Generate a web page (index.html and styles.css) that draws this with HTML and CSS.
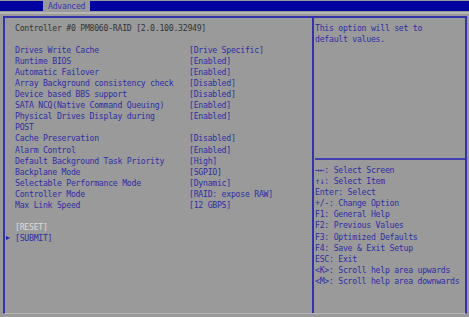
FILE: index.html
```html
<!DOCTYPE html>
<html lang="en">
<head>
  <meta charset="UTF-8">
  <meta name="viewport" content="width=device-width, initial-scale=1.0">
  <title>Advanced - Controller #0</title>
  <link rel="stylesheet" href="styles.css">
</head>
<body>
  <div class="menubar">
    <div class="tab">Advanced</div>
  </div>
  <div class="rule"></div>

  <div class="frame">
    <div class="main">
      <div class="heading">Controller #0 PM8060-RAID [2.0.100.32949]</div>

      <div class="settings">
        <div class="label">Drives Write Cache</div><div class="value">[Drive Specific]</div>
        <div class="label">Runtime BIOS</div><div class="value">[Enabled]</div>
        <div class="label">Automatic Failover</div><div class="value">[Enabled]</div>
        <div class="label">Array Background consistency check</div><div class="value">[Disabled]</div>
        <div class="label">Device based BBS support</div><div class="value">[Disabled]</div>
        <div class="label">SATA NCQ(Native Command Queuing)</div><div class="value">[Enabled]</div>
        <div class="label">Physical Drives Display during<br>POST</div><div class="value">[Enabled]</div>
        <div class="label">Cache Preservation</div><div class="value">[Disabled]</div>
        <div class="label">Alarm Control</div><div class="value">[Enabled]</div>
        <div class="label">Default Background Task Priority</div><div class="value">[High]</div>
        <div class="label">Backplane Mode</div><div class="value">[SGPIO]</div>
        <div class="label">Selectable Performance Mode</div><div class="value">[Dynamic]</div>
        <div class="label">Controller Mode</div><div class="value">[RAID: expose RAW]</div>
        <div class="label">Max Link Speed</div><div class="value">[12 GBPS]</div>
      </div>

      <div class="actions">
        <div class="action muted">[RESET]</div>
        <div class="action current">[SUBMIT]</div>
      </div>
    </div>

    <div class="side">
      <div class="help">This option will set to<br>default values.</div>
      <div class="keys">
        <div>&rarr;&larr;: Select Screen</div>
        <div>&uarr;&darr;: Select Item</div>
        <div>Enter: Select</div>
        <div>+/-: Change Option</div>
        <div>F1: General Help</div>
        <div>F2: Previous Values</div>
        <div>F3: Optimized Defaults</div>
        <div>F4: Save &amp; Exit Setup</div>
        <div>ESC: Exit</div>
        <div>&lt;K&gt;: Scroll help area upwards</div>
        <div>&lt;M&gt;: Scroll help area downwards</div>
      </div>
    </div>
  </div>
</body>
</html>
```

FILE: styles.css
```css
* {
  margin: 0;
  padding: 0;
  box-sizing: border-box;
}

body {
  width: 469px;
  height: 317px;
  overflow: hidden;
  padding-top: 1px;
  background-color: #9a9a9a;
  font-family: "DejaVu Sans Mono", "Liberation Mono", monospace;
  font-size: 8.2px;
  letter-spacing: -0.27px;
  line-height: 11.1px;
  color: #2e2ea6;
}

/* top menu bar with the active tab */
.menubar {
  height: 10px;
  background-color: #0000a0;
  padding-left: 43px;
}

.tab {
  width: 47px;
  height: 10px;
  line-height: 10px;
  padding-left: 5px;
  background-color: #9a9a9a;
  color: #3636b2;
}

.rule {
  height: 2px;
  margin-top: 1px;
  background-color: #b6b6b6;
}

/* main frame */
.frame {
  display: flex;
  height: 298px;
  margin: 2px 2px 0 3px;
  border: 2px solid #3232aa;
  border-bottom: 1px solid #b6b6b6;
}

.main {
  position: relative;
  flex: 0 0 307px;
  padding: 4.5px 0 0 10px;
}

.heading {
  color: #333;
  margin-bottom: 11.1px;
}

.settings {
  display: grid;
  grid-template-columns: 174px auto;
}

.actions {
  margin-top: 11.1px;
}

.action.muted {
  color: #dedede;
}

.action.current {
  position: relative;
}

/* cursor marker in front of the selected item */
.action.current::before {
  content: "";
  position: absolute;
  left: -9px;
  top: 3px;
  border-left: 4px solid #2020a8;
  border-top: 2.5px solid transparent;
  border-bottom: 2.5px solid transparent;
}

/* help column */
.side {
  flex: 1;
  display: flex;
  flex-direction: column;
  border-left: 2px solid #3232aa;
  padding-left: 1px;
}

.help {
  height: 142px;
  padding-top: 4.5px;
  border-bottom: 2px solid #4040ae;
}

.keys {
  padding-top: 5px;
}
```
